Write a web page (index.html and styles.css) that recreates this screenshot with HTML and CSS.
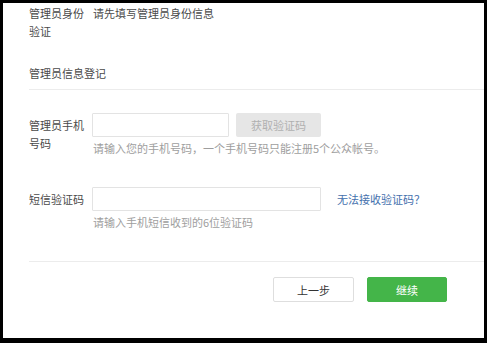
FILE: index.html
```html
<!DOCTYPE html>
<html lang="zh-CN">
<head>
    <meta charset="UTF-8">
    <meta name="viewport" content="width=device-width, initial-scale=1.0">
    <title>管理员信息登记</title>
    <link rel="stylesheet" href="styles.css">
</head>
<body>
    <div class="panel">
        <div class="row first">
            <div class="label">管理员身份验证</div>
            <div class="value">请先填写管理员身份信息</div>
        </div>

        <div class="title">管理员信息登记</div>

        <div class="row phone">
            <div class="label">管理员手机号码</div>
            <div class="field">
                <div class="line">
                    <input class="input short" type="text">
                    <button class="code-btn">获取验证码</button>
                </div>
                <div class="tip">请输入您的手机号码，一个手机号码只能注册5个公众帐号。</div>
            </div>
        </div>

        <div class="row sms">
            <div class="label">短信验证码</div>
            <div class="field">
                <div class="line">
                    <input class="input long" type="text">
                    <a class="link" href="#">无法接收验证码？</a>
                </div>
                <div class="tip">请输入手机短信收到的6位验证码</div>
            </div>
        </div>

        <div class="actions">
            <button class="btn prev">上一步</button>
            <button class="btn next">继续</button>
        </div>
    </div>
</body>
</html>
```

FILE: styles.css
```css
body {
    margin: 0;
    background-color: #000;
    font-family: "Noto Sans CJK SC", "Noto Sans", sans-serif;
    font-size: 11px;
    color: #4a4a4a;
}
.panel {
    margin: 3px 3px 4px 3px;
    height: 335px;
    background-color: #fff;
    padding: 1px 0 0 26px;
    box-sizing: border-box;
}
.row {
    display: flex;
    align-items: flex-start;
}
.label {
    width: 57px;
    margin-right: 6px;
    line-height: 18px;
    flex-shrink: 0;
}
.value {
    line-height: 18px;
    padding-left: 1px;
}
.title {
    margin-top: 24px;
    line-height: 18px;
    padding-bottom: 7px;
    border-bottom: 1px solid #ececec;
}
.phone {
    margin-top: 23px;
}
.sms {
    margin-top: 30px;
}
.phone .label,
.sms .label {
    padding-top: 3px;
}
.line {
    display: flex;
    align-items: center;
}
.input {
    height: 24px;
    box-sizing: border-box;
    border: 1px solid #e3e3e3;
    border-radius: 1px;
    margin: 0;
    padding: 0 6px;
    outline: none;
    background: #fff;
}
.short {
    width: 137px;
}
.long {
    width: 229px;
}
.code-btn {
    margin-left: 7px;
    width: 85px;
    height: 24px;
    border: none;
    border-radius: 2px;
    background-color: #e6e6e6;
    color: #b0b0b0;
    font-family: inherit;
    font-size: 11px;
    padding: 0;
}
.link {
    margin-left: 16px;
    color: #4470ad;
    text-decoration: none;
    line-height: 24px;
}
.tip {
    margin-top: 2px;
    line-height: 18px;
    padding-left: 1px;
    color: #9e9e9e;
}
.actions {
    margin-top: 30px;
    border-top: 1px solid #ececec;
    padding: 15px 37px 0 0;
    display: flex;
    justify-content: flex-end;
    gap: 13px;
}
.btn {
    width: 81px;
    height: 25px;
    border-radius: 2px;
    font-family: inherit;
    font-size: 11px;
    padding: 0;
    cursor: pointer;
}
.prev {
    background-color: #fff;
    border: 1px solid #dedede;
    color: #333;
}
.next {
    width: 80px;
    background-color: #44b549;
    border: 1px solid #44b549;
    color: #fff;
}
```
